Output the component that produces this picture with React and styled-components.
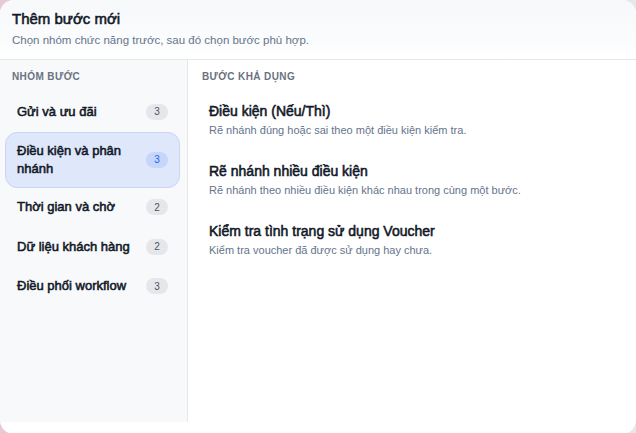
import React from "react";
import styled, { css, createGlobalStyle } from "styled-components";

const Global = createGlobalStyle`
  html, body { margin: 0; padding: 0; }
  body {
    background: #ebe8ee;
    font-family: "Liberation Sans", Arial, sans-serif;
    -webkit-font-smoothing: antialiased;
  }
  * { box-sizing: border-box; }
`;

/* heavy strokes on the regular face, keeping its narrower advance widths */
const heavy = css`
  font-weight: 400;
  -webkit-text-stroke: 0.55px currentColor;
`;

const Backdrop = styled.div`
  width: 636px;
  height: 433px;
  background: linear-gradient(90deg, #e7c9d6 0%, #e8e6ec 30%, #e6e7eb 100%);
  overflow: hidden;
`;

const Modal = styled.div`
  width: 636px;
  height: 434px;
  background: #fff;
  border-radius: 14px;
  overflow: hidden;
  display: flex;
  flex-direction: column;
`;

const Header = styled.header`
  height: 60px;
  padding: 10px 12px 0;
  background: linear-gradient(180deg, #f7f8fa 0%, #fbfcfd 70%, #ffffff 100%);
  border-bottom: 1px solid #e5e7eb;
  flex-shrink: 0;
`;

const Title = styled.h2`
  margin: 0;
  font-size: 15px;
  line-height: 18px;
  ${heavy};
  color: #111827;
`;

const Subtitle = styled.p`
  margin: 5px 0 0;
  font-size: 11.5px;
  line-height: 15px;
  color: #64748b;
`;

const Body = styled.div`
  flex: 1;
  display: grid;
  grid-template-columns: 188px 1fr;
  min-height: 0;
`;

const Sidebar = styled.aside`
  background: #f8f9fb;
  border-right: 1px solid #e5e7eb;
  padding: 11px 7px 0 5px;
  height: 362px;
`;

const SectionLabel = styled.div`
  font-size: 10px;
  line-height: 12px;
  font-weight: 700;
  letter-spacing: 0.4px;
  text-transform: uppercase;
  color: #6b7280;
  padding-left: ${(p) => p.$indent}px;
  margin-bottom: 9px;
`;

const GroupList = styled.div`
  display: flex;
  flex-direction: column;
`;

const GroupItem = styled.div`
  display: flex;
  align-items: center;
  justify-content: space-between;
  gap: 8px;
  min-height: 39.5px;
  padding: 9px 11px;
  border-radius: 12px;
  border: 1px solid ${(p) => (p.$active ? "#c9d6f7" : "transparent")};
  background: ${(p) => (p.$active ? "#dfe7fb" : "transparent")};
`;

const GroupName = styled.span`
  font-size: 13px;
  line-height: 18px;
  ${heavy};
  color: #111827;
  max-width: 124px;
`;

const Badge = styled.span`
  flex-shrink: 0;
  min-width: 22px;
  height: 16px;
  padding: 0 6px;
  border-radius: 8px;
  display: inline-flex;
  align-items: center;
  justify-content: center;
  font-size: 10px;
  color: ${(p) => (p.$active ? "#2563eb" : "#4b5563")};
  background: ${(p) => (p.$active ? "#c5d5fb" : "#e6e7ea")};
`;

const Main = styled.section`
  padding: 11px 14px 0 9px;
`;

const StepList = styled.div`
  display: flex;
  flex-direction: column;
  gap: 4px;
`;

const StepCard = styled.div`
  padding: 10px 12px;
  border-radius: 12px;
`;

const StepTitle = styled.div`
  font-size: 14px;
  line-height: 18px;
  ${heavy};
  color: #111827;
`;

const StepDesc = styled.div`
  margin-top: 3px;
  font-size: 11px;
  line-height: 15px;
  color: #64748b;
`;

const groups = [
  { name: "Gửi và ưu đãi", count: 3 },
  { name: "Điều kiện và phân nhánh", count: 3, active: true },
  { name: "Thời gian và chờ", count: 2 },
  { name: "Dữ liệu khách hàng", count: 2 },
  { name: "Điều phối workflow", count: 3 },
];

const steps = [
  {
    title: "Điều kiện (Nếu/Thì)",
    desc: "Rẽ nhánh đúng hoặc sai theo một điều kiện kiểm tra.",
  },
  {
    title: "Rẽ nhánh nhiều điều kiện",
    desc: "Rẽ nhánh theo nhiều điều kiện khác nhau trong cùng một bước.",
  },
  {
    title: "Kiểm tra tình trạng sử dụng Voucher",
    desc: "Kiểm tra voucher đã được sử dụng hay chưa.",
  },
];

export default function App() {
  return (
    <>
      <Global />
      <Backdrop>
        <Modal>
          <Header>
            <Title>Thêm bước mới</Title>
            <Subtitle>Chọn nhóm chức năng trước, sau đó chọn bước phù hợp.</Subtitle>
          </Header>
          <Body>
            <Sidebar>
              <SectionLabel $indent={7}>Nhóm bước</SectionLabel>
              <GroupList>
                {groups.map((g) => (
                  <GroupItem key={g.name} $active={g.active}>
                    <GroupName>{g.name}</GroupName>
                    <Badge $active={g.active}>{g.count}</Badge>
                  </GroupItem>
                ))}
              </GroupList>
            </Sidebar>
            <Main>
              <SectionLabel $indent={5}>Bước khả dụng</SectionLabel>
              <StepList>
                {steps.map((s) => (
                  <StepCard key={s.title}>
                    <StepTitle>{s.title}</StepTitle>
                    <StepDesc>{s.desc}</StepDesc>
                  </StepCard>
                ))}
              </StepList>
            </Main>
          </Body>
        </Modal>
      </Backdrop>
    </>
  );
}
